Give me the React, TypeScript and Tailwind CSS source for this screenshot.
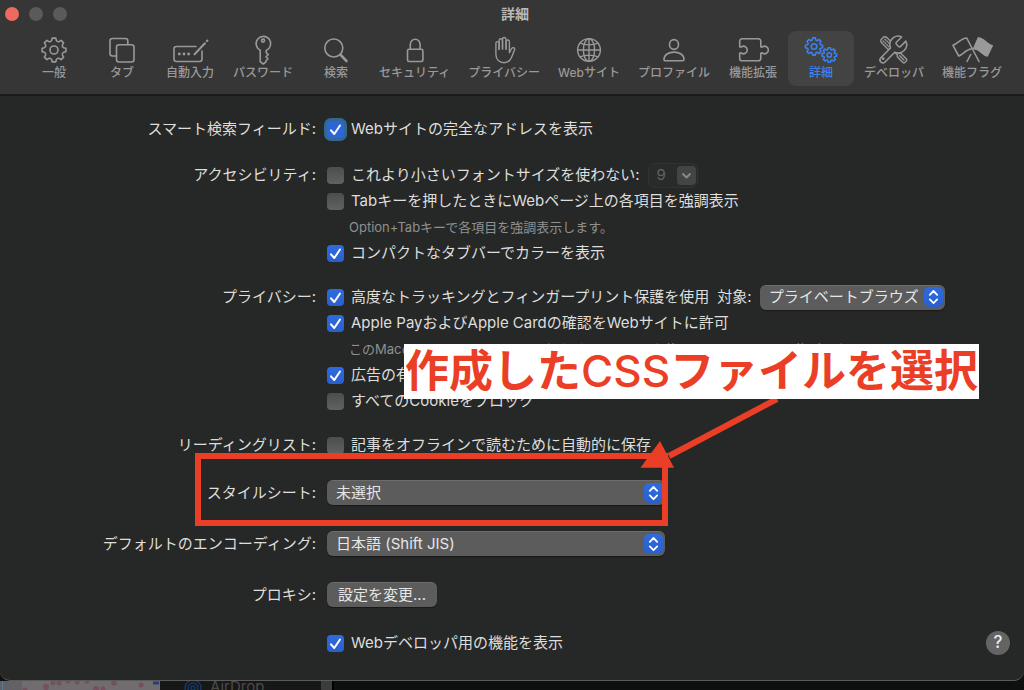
import type { ReactNode } from "react";

function gearPath(cx: number, cy: number, outer: number, inner: number): string {
  const teeth = 8;
  const step = (Math.PI * 2) / teeth;
  const at = (radius: number, angle: number) =>
    `${(cx + radius * Math.sin(angle)).toFixed(2)} ${(cy - radius * Math.cos(angle)).toFixed(2)}`;
  const parts: string[] = [];
  for (let i = 0; i < teeth; i++) {
    const a = i * step;
    parts.push(`${i === 0 ? "M" : "L"}${at(outer, a - 0.15)}`);
    parts.push(`L${at(outer, a + 0.15)}`);
    parts.push(`L${at(inner + 0.6, a + 0.24)}`);
    parts.push(`Q${at(inner - 0.7, a + step / 2)} ${at(inner + 0.6, a + step - 0.24)}`);
  }
  return parts.join(" ") + "Z";
}

function Glyph({ children }: { children: ReactNode }) {
  return (
    <svg
      viewBox="0 0 40 32"
      className="h-8 w-10 overflow-visible"
      fill="none"
      stroke="currentColor"
      strokeWidth="1.6"
      strokeLinecap="round"
      strokeLinejoin="round"
      aria-hidden="true"
    >
      {children}
    </svg>
  );
}

const tabs: { label: string; icon: ReactNode; active?: boolean }[] = [
  {
    label: "一般",
    icon: (
      <>
        <path d={gearPath(20, 16, 12, 9.2)} />
        <circle cx="20" cy="16" r="4" />
      </>
    ),
  },
  {
    label: "タブ",
    icon: (
      <>
        <path d="M14.5 22H10.5a2.5 2.5 0 0 1-2.5-2.5V7a2.5 2.5 0 0 1 2.5-2.5H23.3a2.5 2.5 0 0 1 2.5 2.5V10.5" />
        <rect x="14.5" y="10.7" width="17.5" height="17.3" rx="2.5" />
      </>
    ),
  },
  {
    label: "自動入力",
    icon: (
      <>
        <path d="M26 12.5H6.5a2.5 2.5 0 0 0-2.5 2.5v10a2.5 2.5 0 0 0 2.5 2.5h23a2.5 2.5 0 0 0 2.5-2.5V17" />
        <path d="M24.5 20.2 35 9.2" strokeWidth="2" />
        <path d="M37 6.9l.3-.3" strokeWidth="2.2" />
        <path d="M9.3 20h.01M14 20h.01M18.6 20h.01" strokeWidth="2.8" />
      </>
    ),
  },
  {
    label: "パスワード",
    icon: (
      <>
        <path d="M17.2 16.2a7.3 7.3 0 1 1 6 .2v2.2l2 2-2.2 2.2 2 2-2 2v1.1L20.2 30l-3-2.3z" />
        <circle cx="20" cy="6.6" r="1.5" />
      </>
    ),
  },
  {
    label: "検索",
    icon: (
      <>
        <circle cx="17.8" cy="14" r="9" />
        <path d="M24.6 20.8 30.5 27" strokeWidth="2.6" />
      </>
    ),
  },
  {
    label: "セキュリティ",
    icon: (
      <>
        <rect x="12.5" y="15.3" width="15.4" height="12.2" rx="1.6" />
        <path d="M15.300 15V10.5a4.9 5.3 0 0 1 9.8 0V15" />
      </>
    ),
  },
  {
    label: "プライバシー",
    icon: (
      <g strokeWidth="1.4">
        <path d="M15 15.5V9.2a1.5 1.5 0 0 0-3.1 0V20.5c0 5 3.6 8.2 8.1 8.2 4.2 0 6.3-2.2 7.6-5.4l2.9-7.3c.8-2.3-1.9-3.3-3-1.2l-2.1 3.9V7.7a1.6 1.6 0 0 0-3.3 0V15.3" />
        <path d="M15.1 15.2V6.5a1.7 1.7 0 0 1 3.4 0V15" />
        <path d="M18.5 15V5.2a1.75 1.75 0 0 1 3.5 0V15" />
      </g>
    ),
  },
  {
    label: "Webサイト",
    icon: (
      <g strokeWidth="1.4">
        <circle cx="20" cy="16" r="11.4" />
        <ellipse cx="20" cy="16" rx="5.6" ry="11.4" />
        <path d="M20 4.6v22.8M8.6 16h22.8M11 9.2c5 2.2 13 2.2 18 0M11 22.8c5-2.2 13-2.2 18 0" />
      </g>
    ),
  },
  {
    label: "プロファイル",
    icon: (
      <>
        <ellipse cx="20" cy="10.5" rx="4.5" ry="4.9" />
        <path d="M10 25.4c0-4.6 4.7-7.3 10-7.3s10 2.7 10 7.3q0 1.3-1.4 1.3H11.4Q10 26.7 10 25.4z" />
      </>
    ),
  },
  {
    label: "機能拡張",
    icon: (
      <path d="M9 4.8H25.5a2.3 2.3 0 0 1 2.3 2.3V12.6c.4.7 1.2.7 1.9.1a3.8 3.8 0 1 1 0 6.6c-.7-.6-1.5-.6-1.9.1V24.5a2.3 2.3 0 0 1-2.3 2.3H9a2.3 2.3 0 0 1-2.3-2.3V19.4c.4-.7 1.2-.7 1.9-.1a3.8 3.8 0 1 0 0-6.6c-.7.6-1.5.6-1.9-.1V7.1A2.3 2.3 0 0 1 9 4.8z" />
    ),
  },
  {
    label: "詳細",
    active: true,
    icon: (
      <>
        <path d={gearPath(13, 12.5, 8.7, 6.5)} />
        <circle cx="13" cy="12.5" r="2.8" />
        <path d={gearPath(28.3, 21, 7.4, 5.5)} />
        <circle cx="28.3" cy="21" r="2.2" />
      </>
    ),
  },
  {
    label: "デベロッパ",
    icon: (
      <g strokeWidth="1.4">
        <g transform="translate(20 16) rotate(-45)">
          <path d="M-2.2-16.5h4.4q1.5 1 1.5 3v8q0 1.5-1.5 2.5h-4.4q-1.5-1-1.5-2.5v-8q0-2 1.5-3z" />
          <path d="M-1.3-14v8M1.3-14v8" strokeDasharray="1 1.6" />
          <path d="M-1.2-3V6M1.2-3V6M-1.2 6q-1.3.6-1.3 2v7.2q0 1.3 1.3 1.3h2.4q1.3 0 1.3-1.3V8q0-1.4-1.3-2M0 8v6" />
        </g>
        <path
          className="fill-[#363636]"
          strokeWidth="1.1"
          transform="translate(1.8 -.6) scale(1.4)"
          d="M14.7 6.3a1 1 0 0 0 0 1.4l1.6 1.6a1 1 0 0 0 1.4 0l3.77-3.77a6 6 0 0 1-7.94 7.94l-6.91 6.91a2.12 2.12 0 0 1-3-3l6.91-6.91a6 6 0 0 1 7.94-7.94l-3.76 3.76z"
        />
        <circle cx="9.2" cy="24.7" r=".7" />
      </g>
    ),
  },
  {
    label: "機能フラグ",
    icon: (
      <g>
        <path d="M14.7 4 27 27.5M14.7 4C10 3.5 6 9.5 1 11.3L6.7 22c4.5-1.5 7-6.5 12.5-7" />
        <path d="M26.3 4 21.7 14.5M18.7 20.5 15 27.5" />
        <path fill="currentColor" d="M26.7 4c4.5-.3 8 6.5 13.5 7.7L35.3 22c-4.5-.6-7.5-7-12.6-7z" />
      </g>
    ),
  },
];

function Toolbar() {
  return (
    <header className="border-b-2 border-[#191a1a] bg-[#363636]">
      <h1 className="pt-1 pl-1.5 text-center text-[14px] leading-5 font-bold text-[#b9b9b9]">詳細</h1>
      <nav className="flex justify-center gap-0.5 pt-[7px] pb-2 pl-[7px]" aria-label="設定">
        {tabs.map((tab) => (
          <button
            key={tab.label}
            type="button"
            aria-current={tab.active ? "page" : undefined}
            className={
              tab.active
                ? "flex min-w-[66px] flex-col items-center rounded-lg bg-[#434343] px-2 pt-[3px] pb-1.5 text-[#3b82ec]"
                : "flex min-w-[66px] flex-col items-center rounded-lg px-2 pt-[3px] pb-1.5 text-[#999999]"
            }
          >
            <Glyph>{tab.icon}</Glyph>
            <span className="text-[12px] leading-[14px] font-medium whitespace-nowrap">{tab.label}</span>
          </button>
        ))}
      </nav>
    </header>
  );
}

function Check({
  label,
  checked = false,
  focused = false,
}: {
  label: string;
  checked?: boolean;
  focused?: boolean;
}) {
  return (
    <label className="flex h-[26px] items-center gap-[7px] whitespace-nowrap">
      <span className="relative flex">
        <input
          type="checkbox"
          defaultChecked={checked}
          className={
            focused
              ? "peer size-[17px] appearance-none rounded bg-[#5a5b5a] ring-[3px] ring-[#32688f] outline-none checked:bg-[#2c65d9]"
              : "peer size-[17px] appearance-none rounded bg-linear-to-b from-[#4c4d4c] to-[#606160] checked:from-[#2e6be0] checked:to-[#2a5fcd]"
          }
        />
        <svg
          viewBox="0 0 17 17"
          className="pointer-events-none absolute inset-0 hidden size-[17px] peer-checked:block"
          fill="none"
          stroke="#ffffff"
          strokeWidth="2"
          strokeLinecap="round"
          strokeLinejoin="round"
          aria-hidden="true"
        >
          <path d="M4 9.3 7.3 13 13 4.5" />
        </svg>
      </span>
      <span>{label}</span>
    </label>
  );
}

function Popup({ id, value }: { id: string; value: string }) {
  return (
    <span className="relative block w-full">
      <select
        id={id}
        className="block h-[25px] w-full appearance-none rounded-md border-t border-[#6b6c6b] bg-[#5b5c5b] pr-6 pl-[9px] text-[#e6e6e6] shadow-[0_1px_1px_rgba(0,0,0,0.4)]"
      >
        <option>{value}</option>
      </select>
      <span className="pointer-events-none absolute inset-y-0 right-0.5 my-auto flex h-5 w-[19px] rounded-[5px] bg-linear-to-b from-[#2e6be0] to-[#2a5fcd]">
        <svg
          viewBox="0 0 19 20"
          className="h-5 w-[19px]"
          fill="none"
          stroke="#ffffff"
          strokeWidth="1.8"
          strokeLinecap="round"
          strokeLinejoin="round"
          aria-hidden="true"
        >
          <path d="M5.8 7.8 9.5 4l3.7 3.8M5.8 12.4l3.7 3.8 3.7-3.8" />
        </svg>
      </span>
    </span>
  );
}

function Section({ title, htmlFor, children }: { title?: string; htmlFor?: string; children: ReactNode }) {
  return (
    <section className="grid grid-cols-[316px_minmax(0,1fr)] gap-x-[11px]">
      {htmlFor ? (
        <label htmlFor={htmlFor} className="h-[26px] text-right leading-[26px] whitespace-nowrap">
          {title}
        </label>
      ) : (
        <h2 className="h-[26px] text-right leading-[26px] whitespace-nowrap">{title}</h2>
      )}
      <div>{children}</div>
    </section>
  );
}

function Note({ children }: { children: ReactNode }) {
  return (
    <p className="h-[26px] pl-[22px] text-[13px] leading-[26px] whitespace-nowrap text-[#8f9090]">{children}</p>
  );
}

function Annotation() {
  return (
    <div className="pointer-events-none absolute top-[248px] left-[195px]">
      <svg viewBox="0 0 600 190" className="h-[190px] w-[600px]" aria-hidden="true">
        <rect x="3" y="112" width="467" height="67" fill="none" stroke="#ea3f26" strokeWidth="6" />
        <path d="M582 55 474 112" stroke="#ea3f26" strokeWidth="6" />
        <path d="M465 97 445.5 123.7H479z" fill="#ea3f26" />
      </svg>
      <p className="absolute top-0 left-[209px] bg-white px-px text-[44px] leading-[55px] font-semibold whitespace-nowrap text-[#ea3f26]">
        作成した<span className="font-medium">CSS</span>ファイルを選択
      </p>
    </div>
  );
}

function DesktopEdge() {
  return (
    <div className="flex h-[9px] overflow-hidden" aria-hidden="true">
      <svg viewBox="0 0 160 9" className="h-[9px] w-40 bg-[#716c70]">
        <path d="M0 0h22v9H0z" fill="#626266" />
        <path d="M2.5 0v9" stroke="#557b99" />
        <g fill="#76505f">
          <circle cx="25" cy="9" r="2.5" />
          <circle cx="46" cy="6" r="3" />
          <circle cx="53" cy="2" r="2.5" />
          <circle cx="59" cy="2" r="2.5" />
          <circle cx="68" cy="0" r="2.5" />
          <circle cx="77" cy="1" r="2.5" />
          <circle cx="87" cy="0" r="2.5" />
          <circle cx="96" cy="8" r="3" />
          <circle cx="103" cy="8" r="2.5" />
          <circle cx="114" cy="2" r="2.8" />
          <circle cx="141" cy="4" r="2.5" />
        </g>
        <path d="M153 2h6" stroke="#253f75" strokeWidth="3" />
      </svg>
      <div className="flex h-[9px] w-[161px] gap-2 bg-[#171717] pl-6">
        <svg viewBox="0 0 18 9" className="h-[9px] w-[18px]" fill="none" stroke="#17365e" strokeWidth="1.5">
          <circle cx="9" cy="7" r="8" />
          <circle cx="9" cy="7" r="5" />
          <circle cx="9" cy="7" r="2" />
        </svg>
        <span className="text-[15px] leading-3 text-[#4b4b4b]">AirDrop</span>
      </div>
      <div className="w-[11px] bg-[#3c3c3c]" />
      <div className="flex-1 border-l-2 border-black bg-[#0e0f0f]" />
    </div>
  );
}

export default function App() {
  return (
    <div className="flex min-h-screen flex-col overflow-hidden bg-[#0e0f0f] font-['Inter','Noto_Sans_CJK_JP',sans-serif] text-[15px] text-[#dededd]">
      <div className="relative flex flex-1 flex-col rounded-b-[10px] border-b border-[#5a5b5b] bg-[#262827]">
        <div className="absolute top-[7px] left-[5px] flex gap-2.5">
          <button type="button" aria-label="閉じる" className="size-[14px] rounded-full bg-[#ed6a5e]" />
          <button type="button" aria-label="しまう" className="size-[14px] rounded-full bg-[#5a5a5a]" />
          <button type="button" aria-label="拡大" className="size-[14px] rounded-full bg-[#5a5a5a]" />
        </div>
        <Toolbar />

        <main className="relative flex flex-1 flex-col gap-[18px] pt-5">
          <div className="flex flex-col gap-5">
            <Section title="スマート検索フィールド:">
              <Check label="Webサイトの完全なアドレスを表示" checked focused />
            </Section>

            <Section title="アクセシビリティ:">
              <div className="flex items-center gap-2">
                <Check label="これより小さいフォントサイズを使わない:" />
                <span className="flex h-[25px] w-[50px] items-center rounded-md border border-[#303131] bg-[#292a2a] pr-px">
                  <input
                    aria-label="最小フォントサイズ"
                    defaultValue="9"
                    disabled
                    className="w-0 min-w-0 flex-1 bg-transparent pl-2 text-[#626363]"
                  />
                  <button
                    type="button"
                    disabled
                    aria-label="サイズを選択"
                    className="flex size-[19px] items-center justify-center rounded bg-[#434444]"
                  >
                    <svg
                      viewBox="0 0 19 19"
                      className="size-[19px]"
                      fill="none"
                      stroke="#8a8b8b"
                      strokeWidth="1.8"
                      strokeLinecap="round"
                      strokeLinejoin="round"
                      aria-hidden="true"
                    >
                      <path d="M6 8l3.5 3.5L13 8" />
                    </svg>
                  </button>
                </span>
              </div>
              <Check label="Tabキーを押したときにWebページ上の各項目を強調表示" />
              <Note>Option+Tabキーで各項目を強調表示します。</Note>
              <Check label="コンパクトなタブバーでカラーを表示" checked />
            </Section>
          </div>

          <Section title="プライバシー:">
            <div className="flex items-center gap-2">
              <Check label="高度なトラッキングとフィンガープリント保護を使用" checked />
              <label htmlFor="protection-scope" className="whitespace-nowrap">
                対象:
              </label>
              <div className="w-[185px]">
                <Popup id="protection-scope" value="プライベートブラウズ" />
              </div>
            </div>
            <Check label="Apple PayおよびApple Cardの確認をWebサイトに許可" checked />
            <Note>このMacのTouch IDとApple PayおよびApple Cardを使って、Webでの買い物ができます。</Note>
            <Check label="広告の有効性のプライバシー保護測定を許可" checked />
            <Check label="すべてのCookieをブロック" />
          </Section>

          <Section title="リーディングリスト:">
            <Check label="記事をオフラインで読むために自動的に保存" />
          </Section>

          <div className="flex flex-col gap-[25px] pt-1">
            <Section title="スタイルシート:" htmlFor="style-sheet">
              <div className="w-[338px]">
                <Popup id="style-sheet" value="未選択" />
              </div>
            </Section>

            <Section title="デフォルトのエンコーディング:" htmlFor="encoding">
              <div className="w-[338px]">
                <Popup id="encoding" value="日本語 (Shift JIS)" />
              </div>
            </Section>

            <Section title="プロキシ:">
              <button
                type="button"
                className="block h-[25px] rounded-md border-t border-[#6b6c6b] bg-[#5b5c5b] px-[11px] leading-6 text-[#e6e6e6] shadow-[0_1px_1px_rgba(0,0,0,0.4)]"
              >
                設定を変更...
              </button>
            </Section>
          </div>

          <div className="pt-1">
            <Section>
              <div className="flex items-center justify-between pr-[14px]">
                <Check label="Webデベロッパ用の機能を表示" checked />
                <button
                  type="button"
                  aria-label="ヘルプ"
                  className="flex size-6 items-center justify-center rounded-full bg-[#636463] text-[17px] font-medium text-[#ededed]"
                >
                  ?
                </button>
              </div>
            </Section>
          </div>

          <Annotation />
        </main>
      </div>
      <DesktopEdge />
    </div>
  );
}
